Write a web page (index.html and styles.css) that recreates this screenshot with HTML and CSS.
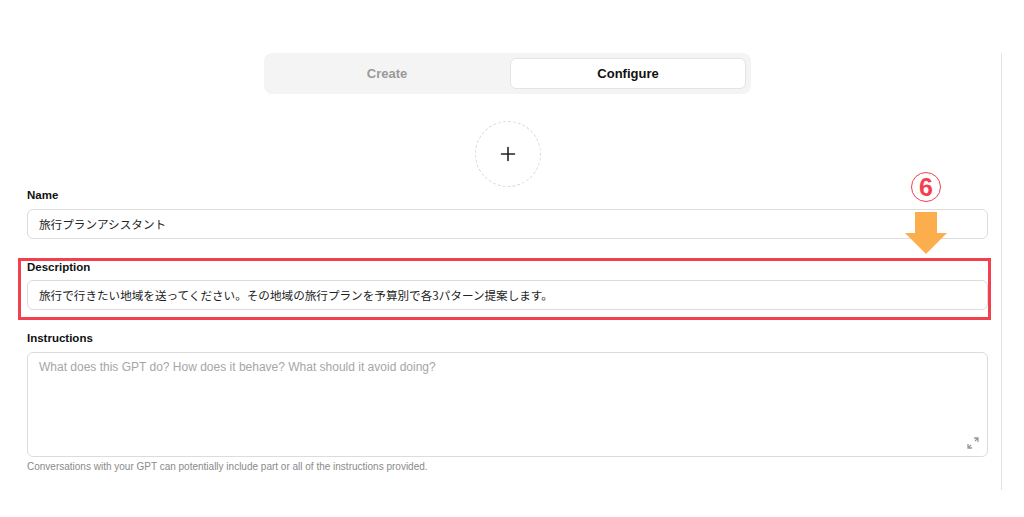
FILE: index.html
```html
<!DOCTYPE html>
<html lang="ja">
<head>
  <meta charset="UTF-8">
  <title>Configure GPT</title>
  <link rel="stylesheet" href="styles.css">
</head>
<body>

<div class="page">
  <div class="editor">
    <div class="tabs">
      <button class="tab">Create</button>
      <button class="tab active">Configure</button>
    </div>

    <div class="avatar">
      <svg width="16" height="16" viewBox="0 0 16 16">
        <path d="M8 1.5v13M1.5 8h13" stroke="#222" stroke-width="1.6" stroke-linecap="round"/>
      </svg>
    </div>

    <div class="field">
      <div class="label">Name</div>
      <div class="input">旅行プランアシスタント</div>
    </div>

    <div class="field marked">
      <div class="label">Description</div>
      <div class="input">旅行で行きたい地域を送ってください。その地域の旅行プランを予算別で各3パターン提案します。</div>
      <div class="mark-box"></div>
      <div class="mark-note">
        <span class="num">6</span>
        <svg class="arrow" width="42" height="42" viewBox="0 0 42 42">
          <path d="M10 0h22v21h10L21 42 0 21h10z" fill="#fbae4b"/>
        </svg>
      </div>
    </div>

    <div class="field">
      <div class="label">Instructions</div>
      <div class="textarea">
        <span class="placeholder">What does this GPT do? How does it behave? What should it avoid doing?</span>
        <svg class="grip" width="12" height="12" viewBox="0 0 12 12">
          <path d="M7 1h4v4M11 1L8 4M5 11H1V7M1 11l3-3" stroke="#999" stroke-width="1.3" fill="none"/>
        </svg>
      </div>
      <div class="hint">Conversations with your GPT can potentially include part or all of the instructions provided.</div>
    </div>
  </div>
  <div class="divider"></div>
</div>

</body>
</html>
```

FILE: styles.css
```css
body {
  margin: 0;
  background: #fff;
  font-family: 'Liberation Sans', Arial, 'Noto Sans CJK JP', sans-serif;
  color: #111;
}

.page {
  display: flex;
  align-items: flex-start;
}

.editor {
  width: 961px;
  margin-left: 27px;
  padding-top: 53px;
  display: flex;
  flex-direction: column;
}

.tabs {
  align-self: center;
  width: 477px;
  display: grid;
  grid-template-columns: 1fr 1fr;
  gap: 5px;
  padding: 5px;
  background: #f4f4f4;
  border-radius: 8px;
}

.tab {
  height: 31px;
  border: 1px solid transparent;
  background: none;
  border-radius: 6px;
  font-family: inherit;
  font-size: 13px;
  font-weight: bold;
  color: #9a9a9a;
}

.tab.active {
  background: #fff;
  border-color: #e4e4e4;
  color: #111;
}

.avatar {
  align-self: center;
  width: 64px;
  height: 64px;
  margin-top: 27px;
  border: 1px dashed #d8d8d8;
  border-radius: 50%;
  display: flex;
  justify-content: center;
  align-items: center;
}

.field {
  position: relative;
  margin-bottom: 20px;
}

.label {
  font-size: 11.5px;
  font-weight: bold;
  line-height: 16px;
  margin-bottom: 6px;
}

.marked .label {
  margin-bottom: 5px;
}

.input {
  height: 30px;
  box-sizing: border-box;
  border: 1px solid #dcdcdc;
  border-radius: 6px;
  padding: 0 11px;
  display: flex;
  align-items: center;
  font-family: 'Noto Sans CJK JP', sans-serif;
  font-size: 11.6px;
  color: #222;
}

.textarea {
  position: relative;
  height: 105px;
  box-sizing: border-box;
  border: 1px solid #dcdcdc;
  border-radius: 6px;
  padding: 4px 11px;
}

.placeholder {
  font-size: 12px;
  color: #a6a6a6;
}

.grip {
  position: absolute;
  right: 8px;
  bottom: 7px;
}

.hint {
  margin-top: 3px;
  font-size: 10px;
  line-height: 14px;
  color: #8a8a8a;
}

/* annotation overlay */
.mark-box {
  position: absolute;
  left: -9px;
  right: -3px;
  top: -1px;
  bottom: -10px;
  border: 3px solid #f2404f;
}

.mark-note {
  position: absolute;
  right: 41px;
  top: -87px;
  width: 42px;
  display: flex;
  flex-direction: column;
  align-items: center;
}

.num {
  width: 28px;
  height: 28px;
  border: 1.5px solid #f2404f;
  border-radius: 50%;
  background: #fff;
  color: #f2404f;
  font-family: 'Liberation Sans', Arial, sans-serif;
  font-weight: bold;
  font-size: 25px;
  line-height: 29px;
  text-align: center;
}

.arrow {
  margin-top: 10px;
}

.divider {
  width: 1px;
  height: 437px;
  margin-top: 53px;
  margin-left: 13px;
  background: #e3e3e3;
}
```
